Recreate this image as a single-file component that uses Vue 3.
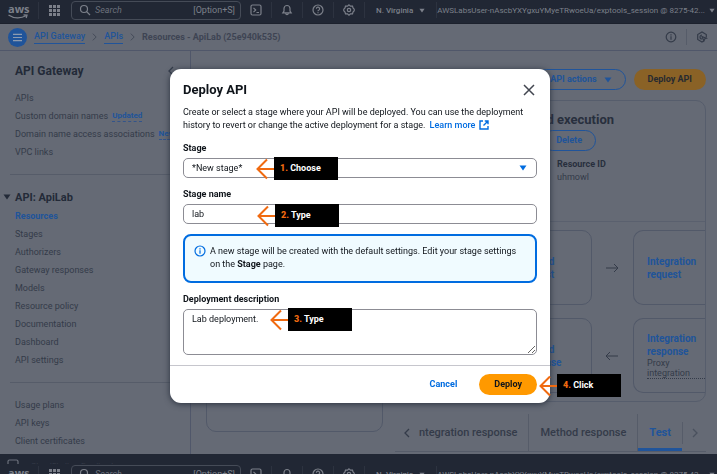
<script setup>
import { ref, h } from 'vue'

const stage = ref('*New stage*')
const stageName = ref('lab')
const description = ref('Lab deployment.')

const generalLinks = [
  { label: 'APIs' },
  { label: 'Custom domain names', badge: 'Updated' },
  { label: 'Domain name access associations', badge: 'New' },
  { label: 'VPC links' },
]
const apiLinks = [
  'Resources', 'Stages', 'Authorizers', 'Gateway responses', 'Models',
  'Resource policy', 'Documentation', 'Dashboard', 'API settings',
]
const accountLinks = ['Usage plans', 'API keys', 'Client certificates']

// Numbered instruction label with an arrow pointing left
const Callout = (props) =>
  h('div', { class: 'callout' }, [
    h('svg', { class: 'callout-arrow', viewBox: '0 0 18 22', 'aria-hidden': 'true' }, [
      h('path', { d: 'M18 11H1.5M11 1.5L1.5 11l9.500 9.500' }),
    ]),
    h('span', { class: 'callout-box' }, [h('b', { class: 'callout-step' }, props.step + '.'), ' ' + props.action]),
  ])
Callout.props = ['step', 'action']
</script>

<template>
  <div class="shell">
    <template v-for="band in 2" :key="band">
      <header class="topnav">
        <a href="#" class="aws" aria-label="AWS home">
          <span>aws</span>
          <svg viewBox="0 0 20 5" aria-hidden="true"><path d="M.5 1C6 4.800 13 4.600 18 1.800M15.500.8l3.500.2-.8 3" /></svg>
        </a>
        <button class="apps" aria-label="Services">
          <svg viewBox="0 0 11 11" aria-hidden="true">
            <template v-for="r in 3" :key="r">
              <rect v-for="c in 3" :key="c" :x="(c - 1) * 4" :y="(r - 1) * 4" width="3" height="3" />
            </template>
          </svg>
        </button>
        <label class="search">
          <svg class="ico" viewBox="0 0 12 12" aria-hidden="true"><circle cx="5" cy="5" r="3.500" /><path d="M7.600 7.600L11 11" /></svg>
          <input type="search" placeholder="Search" aria-label="Search" />
          <span>[Option+S]</span>
        </label>
        <button class="cell" aria-label="CloudShell">
          <svg class="ico" viewBox="0 0 12 12" aria-hidden="true"><rect x="1" y="1" width="10" height="10" rx="1.500" /><path d="M3.500 3.800L5.700 6 3.500 8.200M6.500 8.500h2.500" /></svg>
        </button>
        <button class="cell" aria-label="Notifications">
          <svg class="ico" viewBox="0 0 12 12" aria-hidden="true"><path d="M1.800 8.800h8.400L9 7V4.500a3 3 0 0 0-6 0V7zM4.800 9.500a1.200 1.200 0 0 0 2.400 0" /></svg>
        </button>
        <button class="cell" aria-label="Help">
          <svg class="ico" viewBox="0 0 12 12" aria-hidden="true"><circle cx="6" cy="6" r="5" /><path d="M4.400 4.800a1.600 1.600 0 1 1 2.300 1.400Q6 6.500 6 7.200M6 8.300v1" /></svg>
        </button>
        <button class="cell" aria-label="Settings">
          <svg class="ico" viewBox="0 0 12 12" aria-hidden="true"><path d="M6 .9l1.500 1.300 2-.1.500 1.900 1.200 1.200v1.600L10 8l-.5 1.900-2-.1L6 11.100 4.500 9.800l-2 .1L2 8 .8 6.800V5.200L2 4l.5-1.900 2 .1z" /><circle cx="6" cy="6" r="1.700" /></svg>
        </button>
        <button class="region">N. Virginia <svg class="caret" viewBox="0 0 8 6" aria-hidden="true"><path d="M.5.500h7L4 5.500z" /></svg></button>
        <button class="account"><span>AWSLabsUser-nAscbYXYgxuYMyeTRwoeUa/exptools_session @ 8275-42...</span><svg class="caret" viewBox="0 0 8 6" aria-hidden="true"><path d="M.5.500h7L4 5.500z" /></svg></button>
      </header>

      <template v-if="band === 1">
        <div class="crumbbar">
          <button class="menu" aria-label="Open navigation">
            <svg viewBox="0 0 10 10" aria-hidden="true"><path d="M0 1.500h10M0 5h10M0 8.500h10" /></svg>
          </button>
          <nav class="crumbs" aria-label="Breadcrumb">
            <a href="#">API Gateway</a>
            <svg class="chev" viewBox="0 0 6 10" aria-hidden="true"><path d="M1 1l4 4-4 4" /></svg>
            <a href="#">APIs</a>
            <svg class="chev" viewBox="0 0 6 10" aria-hidden="true"><path d="M1 1l4 4-4 4" /></svg>
            <span>Resources - ApiLab (25e940k535)</span>
          </nav>
          <button class="tool" aria-label="Info">
            <svg class="ico" viewBox="0 0 12 12" aria-hidden="true"><circle cx="6" cy="6" r="4.800" /><path d="M6 5.300v3.400M6 3.300v1.100" /></svg>
          </button>
          <button class="tool last" aria-label="Diagnostics">
            <svg class="ico" viewBox="0 0 12 12" aria-hidden="true"><path d="M10.300 6.500V3.500L6 1 1.700 3.500v5L6 11l2.500-1.400" /><path d="M6 4a2 2 0 1 0 0 4M6 5.500l4.500 1.700-1.900.8-.8 1.800z" /></svg>
          </button>
        </div>

        <div class="body">
          <aside class="sidebar">
            <div class="side-title">
              <h2>API Gateway</h2>
              <button aria-label="Collapse navigation"><svg class="chev" viewBox="0 0 6 10" aria-hidden="true"><path d="M5 1L1 5l4 4" /></svg></button>
            </div>
            <ul>
              <li v-for="l in generalLinks" :key="l.label">
                <a href="#">{{ l.label }}</a><a v-if="l.badge" href="#" class="badge">{{ l.badge }}</a>
              </li>
            </ul>
            <hr />
            <h3><svg class="caret" viewBox="0 0 8 6" aria-hidden="true"><path d="M.5.500h7L4 5.500z" /></svg>API: ApiLab</h3>
            <ul>
              <li v-for="l in apiLinks" :key="l"><a href="#" :class="{ active: l === 'Resources' }">{{ l }}</a></li>
            </ul>
            <hr />
            <ul>
              <li v-for="l in accountLinks" :key="l"><a href="#">{{ l }}</a></li>
            </ul>
          </aside>

          <main class="main">
            <div class="actions">
              <button class="btn outline">API actions <svg class="caret" viewBox="0 0 8 6" aria-hidden="true"><path d="M.5.500h7L4 5.500z" /></svg></button>
              <button class="btn dim-primary">Deploy API</button>
            </div>
            <div class="columns">
              <section class="tree"></section>
              <div class="detail">
                <section class="panel">
                  <div class="panel-head">
                    <h2>Method execution</h2>
                    <button class="btn outline delete">Delete</button>
                  </div>
                  <dl class="meta">
                    <dt>Resource ID</dt>
                    <dd>uhmowl</dd>
                  </dl>
                  <div class="flow">
                    <div class="flow-row">
                      <div class="card"><a href="#">Method request</a></div>
                      <svg class="arrow" viewBox="0 0 14 10" aria-hidden="true"><path d="M1 5h12M9 1l4 4-4 4" /></svg>
                      <div class="card end"><a href="#">Integration request</a></div>
                    </div>
                    <div class="flow-row">
                      <div class="card"><a href="#">Method response</a></div>
                      <svg class="arrow" viewBox="0 0 14 10" aria-hidden="true"><path d="M13 5H1M5 1L1 5l4 4" /></svg>
                      <div class="card end"><a href="#">Integration response</a><span class="proxy">Proxy integration</span></div>
                    </div>
                  </div>
                </section>
                <div class="tabs">
                  <button class="scroll" aria-label="Previous tabs"><svg class="chev" viewBox="0 0 6 10" aria-hidden="true"><path d="M5 1L1 5l4 4" /></svg></button>
                  <div class="tablist" role="tablist">
                    <button role="tab">Integration response</button>
                    <button role="tab">Method response</button>
                    <button role="tab" aria-selected="true" class="selected">Test</button>
                  </div>
                  <button class="scroll faint" aria-label="Next tabs"><svg class="chev" viewBox="0 0 6 10" aria-hidden="true"><path d="M1 1l4 4-4 4" /></svg></button>
                </div>
              </div>
            </div>
          </main>
        </div>

        <footer class="foot">
          <svg class="ico" viewBox="0 0 12 12" aria-hidden="true"><rect x="1" y="1" width="10" height="10" rx="1.500" /></svg>
          <span>CloudShell</span><span>Feedback</span>
        </footer>
      </template>
    </template>

    <div class="overlay">
      <form class="modal" role="dialog" aria-labelledby="dlg-title" @submit.prevent>
        <div class="content">
          <div class="modal-head">
            <h1 id="dlg-title">Deploy API</h1>
            <button type="button" class="close" aria-label="Close"><svg viewBox="0 0 12 12" aria-hidden="true"><path d="M1 1l10 10M11 1L1 11" /></svg></button>
          </div>
          <p class="intro">
            Create or select a stage where your API will be deployed. You can use the deployment history to revert or change the active deployment for a stage.
            <a href="#">Learn more <svg class="ext" viewBox="0 0 10 10" aria-hidden="true"><path d="M4 1H1v8h8V6M5.800 1H9v3.200M9 1L4.500 5.500" /></svg></a>
          </p>
          <div class="field">
            <label for="stage">Stage</label>
            <div class="control">
              <select id="stage" v-model="stage"><option>*New stage*</option></select>
              <svg class="caret select-caret" viewBox="0 0 8 6" aria-hidden="true"><path d="M.5.500h7L4 5.500z" /></svg>
              <Callout class="at-stage" step="1" action="Choose" />
            </div>
          </div>
          <div class="field">
            <label for="stage-name">Stage name</label>
            <div class="control">
              <input id="stage-name" v-model="stageName" type="text" />
              <Callout class="at-name" step="2" action="Type" />
            </div>
          </div>
          <div class="alert">
            <svg class="ico" viewBox="0 0 12 12" aria-hidden="true"><circle cx="6" cy="6" r="5" /><path d="M6 5.300v3.400M6 3.300v1.100" /></svg>
            <p>A new stage will be created with the default settings. Edit your stage settings on the <b>Stage</b> page.</p>
          </div>
          <div class="field">
            <label for="desc">Deployment description</label>
            <div class="control">
              <textarea id="desc" v-model="description"></textarea>
              <Callout class="at-desc" step="3" action="Type" />
            </div>
          </div>
        </div>
        <div class="modal-foot">
          <button type="button" class="btn link">Cancel</button>
          <div class="control">
            <button type="submit" class="btn primary">Deploy</button>
            <Callout class="at-deploy" step="4" action="Click" />
          </div>
        </div>
      </form>
    </div>
  </div>
</template>

<style>
body {
  margin: 0;
  overflow: hidden;
}
</style>

<style scoped>
* { box-sizing: border-box; }
.shell {
  display: flex;
  flex-direction: column;
  height: 100vh;
  overflow: hidden;
  background: #656a75;
  color: #343b49;
  font: 9px/13px Roboto, "Noto Sans", sans-serif;
}
h1, h2, h3, p, ul, dl, dd { margin: 0; padding: 0; }
ul { list-style: none; }
button {
  display: flex;
  align-items: center;
  padding: 0;
  border: 0;
  background: none;
  color: inherit;
  font: inherit;
  white-space: nowrap;
}
a { color: inherit; text-decoration: none; }
svg { flex: none; fill: none; stroke: currentColor; }
.ico { width: 12px; height: 12px; stroke-width: 1.200; }
.caret { width: 8px; height: 6px; fill: currentColor; stroke: none; }
.chev { width: 6px; height: 10px; stroke-width: 1.300; }

/* Top navigation */
.topnav {
  display: flex;
  flex: none;
  align-items: center;
  height: 24px;
  padding: 0 6px 3px 8px;
  overflow: hidden;
  background: #212734;
  border-bottom: 1px solid #1c212d;
  color: #7c808a;
}
.topnav > * { flex: none; }
.topnav:last-of-type { margin-bottom: -14px; }
.aws {
  display: flex;
  flex-direction: column;
  width: 31px;
  padding-top: 2px;
  border-right: 1px solid #2d3340;
  font: bold 11px/10px "Open Sans", sans-serif;
}
.aws svg { width: 20px; height: 5px; stroke-width: 1.300; }
.apps { padding: 0 11px 0 10px; }
.apps svg { width: 11px; height: 11px; fill: currentColor; stroke: none; }
.search {
  display: flex;
  align-items: center;
  gap: 4px;
  width: 170px;
  height: 19px;
  padding: 0 5px 0 7px;
  border: 1px solid #454b57;
  border-radius: 4px;
}
.search input {
  flex: 1;
  min-width: 0;
  padding: 0;
  border: 0;
  background: none;
  color: inherit;
  font: italic 9px/13px Roboto, sans-serif;
}
.search input::placeholder { color: #6c717c; }
.cell {
  justify-content: center;
  width: 31px;
  height: 16px;
  border-right: 1px solid #2d3340;
}
.region {
  gap: 6px;
  height: 16px;
  padding: 0 11px;
  border-right: 1px solid #2d3340;
  font-size: 8px;
  font-weight: 500;
}
.region .caret, .account .caret { width: 6px; height: 5px; }
.topnav .account {
  flex: 1;
  justify-content: flex-end;
  gap: 4px;
  font-size: 8px;
}

/* Breadcrumb bar */
.crumbbar {
  display: flex;
  flex: none;
  align-items: center;
  height: 27px;
  padding: 0 3px 0 8px;
  border-bottom: 1px solid #50576a;
}
.menu {
  justify-content: center;
  width: 19px;
  height: 19px;
  border-radius: 50%;
  background: #20549a;
  color: #8d9bb0;
}
.menu svg { width: 9px; height: 9px; stroke-width: 1.300; }
.crumbs {
  display: flex;
  flex: 1;
  align-items: center;
  gap: 7px;
  padding-left: 7px;
  font-weight: 700;
  color: #3e4453;
}
.crumbs a { border-bottom: 1px solid #20549a; color: #20549a; font-weight: 500; }
.crumbs .chev { width: 5px; stroke-width: 1; }
.tool { height: 16px; padding: 0 9px; border-right: 1px solid #565c69; }
.tool.last { padding-right: 6px; border: 0; }

/* Side navigation */
.body { display: flex; flex: 1; min-height: 0; }
.sidebar {
  flex: none;
  width: 191px;
  padding: 12px 0 0 10px;
  border-right: 1px solid #50576a;
}
.side-title { display: flex; justify-content: space-between; padding: 0 16px 10px 5px; }
.side-title h2 { color: #232a38; font-size: 12px; line-height: 16px; }
.sidebar li { display: flex; align-items: center; height: 18px; padding-left: 5px; }
.sidebar .active { color: #20549a; font-weight: 700; }
.badge {
  margin-left: 4px;
  border-bottom: 1px dashed #33548a;
  color: #20549a;
  font-size: 8px;
  font-weight: 700;
  line-height: 10px;
}
hr { margin: 13px 0; border: 0; border-top: 1px solid #565c69; }
.sidebar h3 {
  display: flex;
  align-items: center;
  gap: 4px;
  height: 18px;
  margin: 0 0 1px -7px;
  color: #232a38;
  font-size: 11px;
}

/* Main area */
.main {
  display: flex;
  flex: 1;
  flex-direction: column;
  min-width: 0;
  padding: 18px 11px 0 15px;
}
.actions { display: flex; justify-content: flex-end; gap: 8px; }
.btn {
  justify-content: center;
  height: 21px;
  padding: 0 14px;
  border: 1px solid transparent;
  border-radius: 11px;
  font-size: 9px;
  font-weight: 700;
}
.outline { gap: 7px; padding: 0 13px; border-color: #20549a; color: #20549a; }
.dim-primary { padding: 0 13px; background: #8a6226; color: #272a30; }
.columns { display: flex; flex: 1; gap: 12px; padding-top: 10px; min-height: 0; }
.tree {
  width: 177px;
  margin-bottom: 22px;
  border: 1px solid #525969;
  border-radius: 10px;
}
.detail { display: flex; flex: 1; flex-direction: column; min-width: 0; }
.panel {
  flex: none;
  padding-bottom: 8px;
  border: 1px solid #565d6c;
  border-radius: 10px;
}
.panel-head {
  display: flex;
  flex-direction: column;
  align-items: flex-end;
  gap: 1px;
  padding: 10px 91px 0 0;
}
.panel-head h2 { color: #282f3d; font-size: 13px; line-height: 18px; }
.delete { margin-right: 18px; }
.meta { padding: 7px 20px 0 0; margin-left: 161px; }
.meta dt { color: #282f3d; font-weight: 700; }
.flow {
  display: flex;
  flex-direction: column;
  gap: 13px;
  margin-top: 37px;
  padding-top: 8px;
  border-top: 1px solid #5a606e;
}
.flow-row { display: flex; justify-content: flex-end; align-items: center; }
.card {
  display: flex;
  flex-direction: column;
  justify-content: center;
  width: 84px;
  height: 75px;
  padding: 0 20px 0 11px;
  border: 1px solid #525969;
  border-radius: 10px;
}
.card a { color: #20549a; font-size: 10px; font-weight: 700; }
.card.end { width: 72px; padding: 0 0 0 13px; border-right: 0; border-radius: 10px 0 0 10px; }
.card.end a { padding-right: 9px; }
.proxy { border-bottom: 1px dotted #343b49; line-height: 10px; }
.arrow { width: 14px; height: 10px; margin: 0 14px 0 13px; }
.tabs {
  display: flex;
  align-items: center;
  height: 38px;
  margin-top: 12px;
  border-bottom: 1px solid #565c69;
}
.scroll { justify-content: center; width: 24px; height: 22px; }
.faint { border-left: 1px solid #565c69; color: #4a515e; }
.tablist {
  display: flex;
  flex: 1;
  justify-content: flex-end;
  align-self: stretch;
  min-width: 0;
  overflow: hidden;
}
.tablist button {
  flex: none;
  padding: 0 11px;
  border-right: 1px solid #565c69;
  font-size: 11px;
  font-weight: 500;
}
.tablist .selected { border-right: 0; border-bottom: 3px solid #20549a; padding-top: 3px; color: #20549a; font-weight: 700; }

.foot {
  display: flex;
  flex: none;
  gap: 12px;
  height: 10px;
  padding: 5px 7px 0;
  overflow: hidden;
  background: #212734;
  color: #6c717c;
}
.foot span { color: #353b48; font-size: 8px; }

/* Dialog */
.overlay {
  position: fixed;
  inset: 0;
  display: flex;
  align-items: flex-start;
  justify-content: center;
  padding: 69px 0 0 3px;
}
.modal {
  width: 380px;
  border-radius: 11px;
  background: #fff;
  box-shadow: 0 1px 6px #2a313e;
  color: #0f141a;
}
.content { display: flex; flex-direction: column; gap: 10px; padding: 12px 13px 10px; }
.modal-head { display: flex; align-items: center; justify-content: space-between; height: 17px; padding-right: 2px; }
.modal-head h1 { font-size: 13px; line-height: 17px; }
.close svg { width: 12px; height: 12px; stroke: #424650; stroke-width: 1.500; }
.intro { margin-top: -2px; }
.intro a { margin-left: 2px; color: #006ce0; font-weight: 500; white-space: nowrap; }
.ext { width: 10px; height: 10px; margin-left: 1px; stroke-width: 1.400; vertical-align: -2px; }
.field { display: flex; flex-direction: column; gap: 3px; }
.field label { font-weight: 700; }
.control { position: relative; display: flex; }
.control select, .control input, .control textarea {
  flex: 1;
  min-width: 0;
  height: 20px;
  margin: 0;
  padding: 0 8px;
  appearance: none;
  border: 1px solid #8c8c94;
  border-radius: 5px;
  background: #fff;
  color: #0f141a;
  font: 9px/13px Roboto, sans-serif;
}
.control textarea { height: 46px; padding-top: 3px; resize: vertical; }
.select-caret { position: absolute; top: 7px; right: 10px; color: #006ce0; }
.alert {
  display: flex;
  gap: 4px;
  height: 49px;
  padding: 9px 15px 0 9px;
  border: 2px solid #006ce0;
  border-radius: 8px;
  background: #f0fbff;
}
.alert .ico { color: #006ce0; }
.modal-foot {
  display: flex;
  justify-content: flex-end;
  gap: 7px;
  padding: 8px 13px;
  border-top: 1px solid #c6c6cd;
}
.link { color: #006ce0; }
.primary { background: #ff9900; color: #0f141a; }

/* Step callouts laid over the dialog */
.callout {
  position: absolute;
  z-index: 1;
  display: flex;
  align-items: center;
}
.callout :deep(.callout-arrow) { flex: none; width: 18px; height: 22px; fill: none; stroke: #f06a10; stroke-width: 2; }
.callout :deep(.callout-box) {
  box-sizing: border-box;
  width: 64px;
  height: 23px;
  padding: 5px 6px;
  background: #000;
  color: #fff;
  font-weight: 700;
  white-space: nowrap;
}
.callout :deep(.callout-step) { color: #f06a10; }
.at-stage { top: -1px; left: 73px; }
.at-name { top: 0; left: 74px; }
.at-desc { top: -1px; left: 87px; }
.at-deploy { top: 0; left: calc(100% + 2px); }
</style>
